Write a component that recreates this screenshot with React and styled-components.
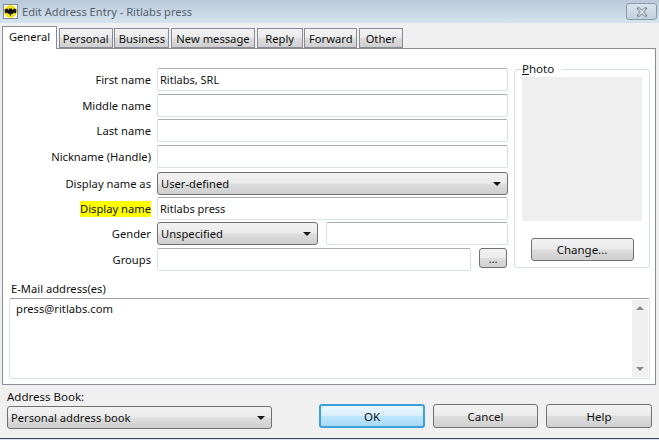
import styled, { createGlobalStyle } from "styled-components";

const GlobalStyle = createGlobalStyle`
  * { box-sizing: border-box; }
  html, body { margin: 0; padding: 0; background: #f0f0f0; }
  body {
    font-family: "Noto Sans", "Liberation Sans", sans-serif;
    font-size: 11.5px;
    color: #111;
  }
`;

const Window = styled.div`
  width: 659px;
  height: 440px;
  display: flex;
  flex-direction: column;
  overflow: hidden;
  background: #f0f0f0;
  border-bottom: 1px solid #d5e3f0;
`;

const TitleBar = styled.div`
  height: 23px;
  flex: none;
  display: flex;
  align-items: center;
  padding: 0 2px 0 3px;
  background: linear-gradient(180deg, #b9c9d9 0%, #d5e3f0 100%);
`;

const TitleText = styled.span`
  margin-left: 4px;
  color: #56606b;
  font-size: 11.1px;
`;

const CloseButton = styled.div`
  margin-left: auto;
  width: 31px;
  height: 17px;
  display: flex;
  align-items: center;
  justify-content: center;
  border: 1px solid #8b99a8;
  border-radius: 3px;
  background: linear-gradient(180deg, #d8e2ec 0%, #c4d1de 100%);
`;

const Tabs = styled.div`
  height: 25px;
  flex: none;
  display: flex;
  align-items: flex-end;
  padding: 3px 0 0 2px;
  gap: 1.67px;
`;

const Tab = styled.div`
  position: relative;
  height: ${(p) => (p.$active ? "23px" : "20px")};
  width: ${(p) => p.$width}px;
  display: flex;
  align-items: center;
  justify-content: center;
  font-size: 11.2px;
  padding-bottom: ${(p) => (p.$active ? "3px" : "0")};
  border: 1px solid #898c95;
  border-bottom: ${(p) => (p.$active ? "none" : "1px solid #898c95")};
  background: ${(p) =>
    p.$active
      ? "#fff"
      : "linear-gradient(180deg, #f2f2f2 0%, #ebebeb 50%, #dddddd 52%, #cfcfcf 100%)"};
  margin-bottom: ${(p) => (p.$active ? "-1px" : "0")};
  z-index: ${(p) => (p.$active ? 1 : 0)};
`;

const Panel = styled.div`
  flex: none;
  width: 654px;
  height: 337px;
  margin-left: 2px;
  padding: 19px 5px 0 5px;
  background: #fff;
  border: 1px solid #898c95;
`;

const Upper = styled.div`
  display: flex;
  height: 200px;
`;

const Form = styled.div`
  width: 500px;
  display: grid;
  grid-template-columns: 149px 351px;
  grid-template-rows: 26px 25px 26px 27px 25px 25px 26px 23px;
  align-items: start;
`;

const Label = styled.div`
  height: 23px;
  display: flex;
  align-items: center;
  justify-content: flex-end;
  padding-right: 6px;
  font-size: 11.2px;
`;

const Highlight = styled.span`
  background: #ffff00;
  line-height: 16px;
`;

const Field = styled.input`
  width: ${(p) => (p.$width ? `${p.$width}px` : "100%")};
  height: 23px;
  flex: none;
  padding: 0 2px;
  margin: 0;
  border: 1px solid #d8e0e8;
  border-top-color: #abadb3;
  border-radius: 2px;
  background: #fff;
  font: inherit;
  font-size: 11px;
  color: #111;
  outline: none;
`;

const Combo = styled.div`
  width: ${(p) => (p.$width ? `${p.$width}px` : "100%")};
  height: 23px;
  flex: none;
  display: flex;
  align-items: center;
  justify-content: space-between;
  padding: 0 6px 0 3px;
  font-size: 11.2px;
  border: 1px solid #707070;
  border-radius: 3px;
  background: linear-gradient(180deg, #f2f2f2 0%, #ebebeb 48%, #dddddd 52%, #cfcfcf 100%);
`;

const Arrow = styled.span`
  width: 0;
  height: 0;
  border-left: 4px solid transparent;
  border-right: 4px solid transparent;
  border-top: 4px solid #111;
`;

const FieldRow = styled.div`
  display: flex;
  align-items: flex-start;
  gap: ${(p) => p.$gap || 0}px;
`;

const PhotoGroup = styled.fieldset`
  width: 136px;
  height: 205px;
  margin: -5px 0 0 6px;
  padding: 0 7px;
  border: 1px solid #d5dfe5;
  border-radius: 3px;
  display: flex;
  flex-direction: column;
  align-items: center;
`;

const PhotoLegend = styled.legend`
  padding: 0 8px 0 0;
  margin-left: 0;
  line-height: 12px;
  u { text-underline-offset: 1px; }
`;

const PhotoBox = styled.div`
  width: 120px;
  height: 144px;
  margin-top: 2px;
  background: #efefef;
`;

const Button = styled.div`
  width: ${(p) => p.$width}px;
  height: ${(p) => p.$height || 24}px;
  flex: none;
  display: flex;
  align-items: center;
  justify-content: center;
  border: 1px solid #707070;
  border-radius: 3px;
  background: ${(p) =>
    p.$primary
      ? "linear-gradient(180deg, #eaf6fd 0%, #d9f0fc 48%, #bee6fd 52%, #a7d9f5 100%)"
      : "linear-gradient(180deg, #f2f2f2 0%, #ebebeb 48%, #dddddd 52%, #cfcfcf 100%)"};
  ${(p) => p.$primary && "border: 2px solid #3c9fd8;"}
  ${(p) => p.$margin && `margin: ${p.$margin};`}
`;

const EmailLabel = styled.div`
  margin: 13px 0 0 3px;
  line-height: 16px;
  font-size: 11.2px;
`;

const EmailBox = styled.div`
  width: 641px;
  height: 81px;
  margin: 1px 0 0 1px;
  display: flex;
  justify-content: space-between;
  padding: 1px 1px 1px 6px;
  border: 1px solid #d8e0e8;
  border-top-color: #9a9ca3;
  border-radius: 2px;
`;

const EmailText = styled.div`
  font-size: 11.2px;
  line-height: 18px;
`;

const ScrollBar = styled.div`
  width: 16px;
  display: flex;
  flex-direction: column;
  justify-content: space-between;
  align-items: center;
  padding: 6px 0;
  background: #f0f0f0;
`;

const ScrollArrow = styled.span`
  width: 0;
  height: 0;
  border-left: 4px solid transparent;
  border-right: 4px solid transparent;
  ${(p) => (p.$up ? "border-bottom: 4px solid #8a8a8a;" : "border-top: 4px solid #8a8a8a;")}
`;

const Footer = styled.div`
  flex: 1;
  display: flex;
  align-items: flex-end;
  padding: 0 4px 9px 7px;
  border-bottom: 1px solid #3e4650;
`;

const BookColumn = styled.div`
  display: flex;
  flex-direction: column;
  width: 265px;
  margin-right: 47px;
`;

const BookLabel = styled.div`
  line-height: 15px;
  margin-bottom: 2px;
`;

const ButtonRow = styled.div`
  display: flex;
  gap: 8px;
  margin-bottom: 1px;
`;

const tabs = [
  ["General", 55],
  ["Personal", 54],
  ["Business", 55],
  ["New message", 84],
  ["Reply", 46],
  ["Forward", 53],
  ["Other", 44],
];

const BatIcon = () => (
  <svg width="15" height="15" viewBox="0 0 15 15">
    <rect x="0.5" y="0.5" width="14" height="14" fill="#fff" stroke="#223" strokeDasharray="1 1" />
    <circle cx="7.5" cy="7.5" r="6.4" fill="#f5e61c" />
    <path
      d="M1.6 5.5 L4 4.6 L5.8 6 L6.4 3.8 L7 4.8 L8 4.8 L8.6 3.8 L9.2 6 L11 4.6 L13.4 5.5 L13 9.6 L11 8.6 L9.8 10 L8.6 9.6 L7.5 12.6 L6.4 9.6 L5.2 10 L4 8.6 L2 9.6 Z"
      fill="#111"
    />
  </svg>
);

const CloseGlyph = () => (
  <svg width="12" height="10" viewBox="0 0 12 10">
    <path
      d="M1 1 H3.5 L6 3.4 L8.5 1 H11 L7.6 5 L11 9 H8.5 L6 6.6 L3.5 9 H1 L4.4 5 Z"
      fill="#f4f7fa"
      stroke="#59636e"
      strokeWidth="0.9"
    />
  </svg>
);

export default function App() {
  return (
    <>
      <GlobalStyle />
      <Window>
        <TitleBar>
          <BatIcon />
          <TitleText>Edit Address Entry - Ritlabs press</TitleText>
          <CloseButton>
            <CloseGlyph />
          </CloseButton>
        </TitleBar>

        <Tabs>
          {tabs.map(([name, width], index) => (
            <Tab key={name} $active={index === 0} $width={width}>
              {name}
            </Tab>
          ))}
        </Tabs>

        <Panel>
          <Upper>
            <Form>
              <Label>First name</Label>
              <Field readOnly value="Ritlabs, SRL" />
              <Label>Middle name</Label>
              <Field readOnly value="" />
              <Label>Last name</Label>
              <Field readOnly value="" />
              <Label>Nickname (Handle)</Label>
              <Field readOnly value="" />
              <Label>Display name as</Label>
              <Combo>
                User-defined
                <Arrow />
              </Combo>
              <Label>
                <Highlight>Display name</Highlight>
              </Label>
              <Field readOnly value="Ritlabs press" />
              <Label>Gender</Label>
              <FieldRow $gap={8}>
                <Combo $width={161}>
                  Unspecified
                  <Arrow />
                </Combo>
                <Field readOnly value="" $width={182} />
              </FieldRow>
              <Label>Groups</Label>
              <FieldRow $gap={8}>
                <Field readOnly value="" $width={314} />
                <Button $width={28} $height={20}>
                  ...
                </Button>
              </FieldRow>
            </Form>

            <PhotoGroup>
              <PhotoLegend>
                <u>P</u>hoto
              </PhotoLegend>
              <PhotoBox />
              <Button $width={103} $height={23} $margin="17px 0 0">
                Change...
              </Button>
            </PhotoGroup>
          </Upper>

          <EmailLabel>E-Mail address(es)</EmailLabel>
          <EmailBox>
            <EmailText>press@ritlabs.com</EmailText>
            <ScrollBar>
              <ScrollArrow $up />
              <ScrollArrow />
            </ScrollBar>
          </EmailBox>
        </Panel>

        <Footer>
          <BookColumn>
            <BookLabel>Address Book:</BookLabel>
            <Combo>
              Personal address book
              <Arrow />
            </Combo>
          </BookColumn>
          <ButtonRow>
            <Button $primary $width={106}>
              OK
            </Button>
            <Button $width={105}>Cancel</Button>
            <Button $width={106}>Help</Button>
          </ButtonRow>
        </Footer>
      </Window>
    </>
  );
}
